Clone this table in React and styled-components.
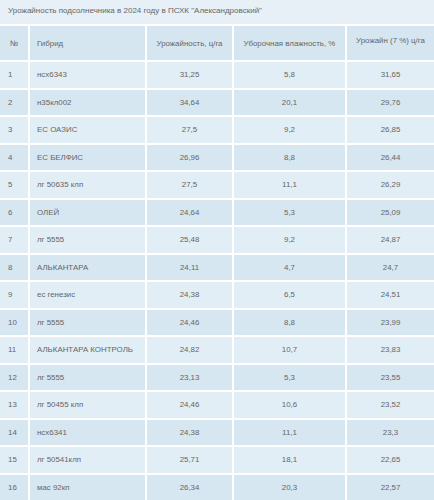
import styled, { createGlobalStyle } from "styled-components";

const rows = [
  ["1", "нсх6343", "31,25", "5,8", "31,65"],
  ["2", "н35кл002", "34,64", "20,1", "29,76"],
  ["3", "ЕС ОАЗИС", "27,5", "9,2", "26,85"],
  ["4", "ЕС БЕЛФИС", "26,96", "8,8", "26,44"],
  ["5", "лг 50635 клп", "27,5", "11,1", "26,29"],
  ["6", "ОЛЕЙ", "24,64", "5,3", "25,09"],
  ["7", "лг 5555", "25,48", "9,2", "24,87"],
  ["8", "АЛЬКАНТАРА", "24,11", "4,7", "24,7"],
  ["9", "ес генезис", "24,38", "6,5", "24,51"],
  ["10", "лг 5555", "24,46", "8,8", "23,99"],
  ["11", "АЛЬКАНТАРА КОНТРОЛЬ", "24,82", "10,7", "23,83"],
  ["12", "лг 5555", "23,13", "5,3", "23,55"],
  ["13", "лг 50455 клп", "24,46", "10,6", "23,52"],
  ["14", "нсх6341", "24,38", "11,1", "23,3"],
  ["15", "лг 50541клп", "25,71", "18,1", "22,65"],
  ["16", "мас 92кп", "26,34", "20,3", "22,57"],
];

export default function App() {
  return (
    <>
      <Global />
      <Title>Урожайность подсолнечника в 2024 году в ПСХК "Александровский"</Title>
      <Table>
        <colgroup>
          <col style={{ width: 28 }} />
          <col style={{ width: 115 }} />
          <col style={{ width: 85 }} />
          <col style={{ width: 111 }} />
          <col style={{ width: 87 }} />
        </colgroup>
        <thead>
          <HeadRow>
            <Th>№</Th>
            <Th $left>Гибрид</Th>
            <Th>Урожайность, ц/га</Th>
            <Th>Уборочная влажность, %</Th>
            <Th $raised>Урожайн (7 %) ц/га</Th>
          </HeadRow>
        </thead>
        <tbody>
          {rows.map((r, i) => (
            <Row key={r[0]} $even={i % 2 === 1}>
              <Td $left>{r[0]}</Td>
              <Td $left $name>{r[1]}</Td>
              <Td>{r[2]}</Td>
              <Td>{r[3]}</Td>
              <Td>{r[4]}</Td>
            </Row>
          ))}
        </tbody>
      </Table>
    </>
  );
}

const Global = createGlobalStyle`
  body {
    margin: 0;
    background: #ffffff;
    font-family: "Liberation Sans", Arial, sans-serif;
    overflow: hidden;
  }
`;

const Title = styled.div`
  height: 24px;
  line-height: 21px;
  padding-left: 8px;
  background: #e6f0f6;
  color: #666;
  font-size: 8px;
`;

const Table = styled.table`
  table-layout: fixed;
  width: calc(100% + 4px);
  margin: 0 -2px;
  border-collapse: separate;
  border-spacing: 2px;
  font-size: 7.9px;
  color: #666;
`;

const HeadRow = styled.tr`
  height: 34px;
`;

const Th = styled.th`
  padding: 0;
  padding-top: ${p => (p.$raised ? "10px" : "0")};
  padding-left: ${p => (p.$left ? "7px" : "0")};
  vertical-align: ${p => (p.$raised ? "top" : "middle")};
  background: #d5e6f0;
  font-weight: normal;
  text-align: ${p => (p.$left ? "left" : "center")};
  white-space: nowrap;
  &:first-child {
    text-align: center;
    padding-left: 0;
  }
`;

const Row = styled.tr`
  background: ${p => (p.$even ? "#d6e7f1" : "#e2eef5")};
`;

const Td = styled.td`
  height: 25.5px;
  padding: 0;
  padding-left: ${p => (p.$name ? "7px" : p.$left ? "8px" : "0")};
  text-align: ${p => (p.$left ? "left" : "center")};
  white-space: nowrap;
`;
